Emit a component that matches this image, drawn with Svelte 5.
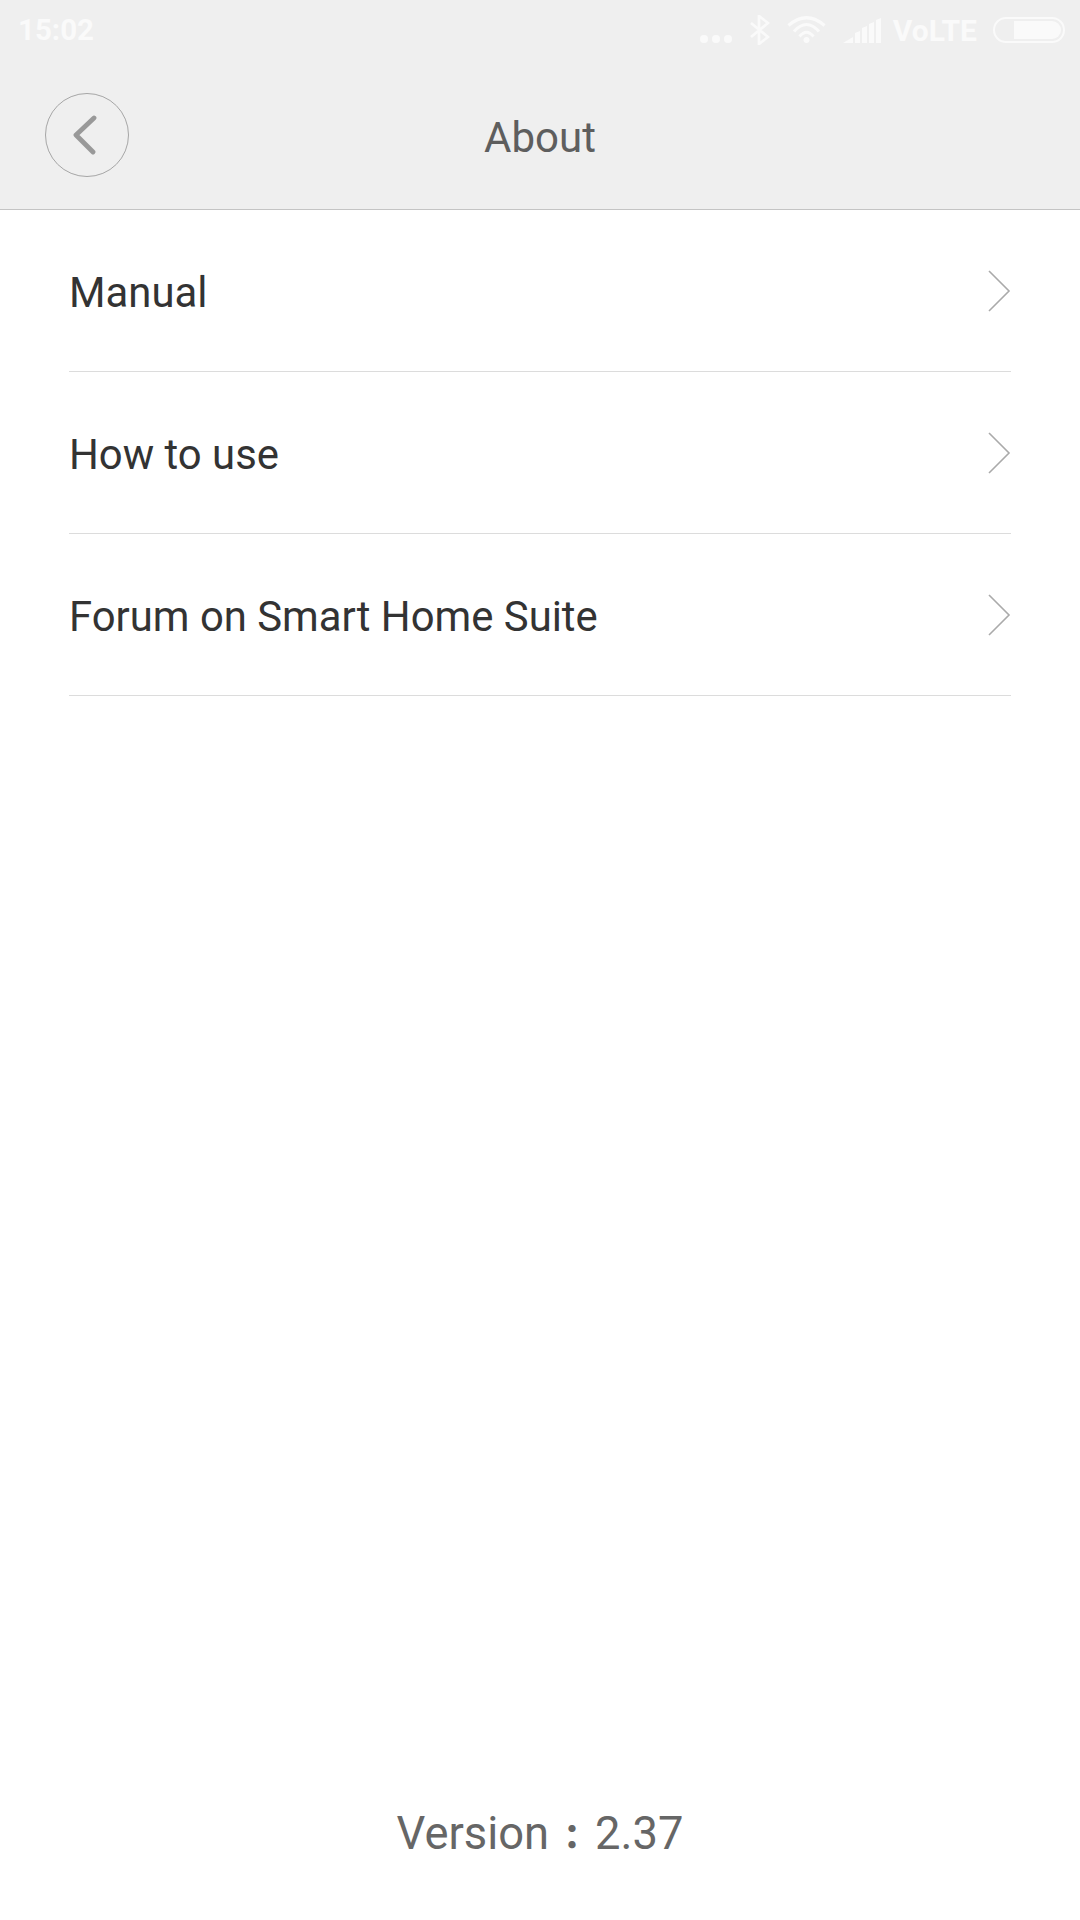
<script>
	const rows = ['Manual', 'How to use', 'Forum on Smart Home Suite'];
</script>

<div class="page">
	<div class="top">
		<div class="status">
			<span class="time">15:02</span>
			<div class="icons">
				<svg class="dots" width="32" height="8" viewBox="0 0 32 8">
					<circle cx="4" cy="4" r="4" />
					<circle cx="16" cy="4" r="4" />
					<circle cx="28" cy="4" r="4" />
				</svg>
				<svg class="bt" width="20" height="30" viewBox="0 0 20 30">
					<path d="M1 8 L18 22 L9 29 V1 L18 8 L1 22" fill="none" stroke="#fafafa" stroke-width="2.6" />
				</svg>
				<svg class="wifi" width="39" height="27" viewBox="0 0 39 27">
					<path d="M1.5 9.5 Q19.5 -6 37.5 9.5" fill="none" stroke="#fafafa" stroke-width="3.2" />
					<path d="M7 15.5 Q19.5 1.5 32 15.5" fill="none" stroke="#fafafa" stroke-width="3.2" />
					<path d="M12.5 20.5 Q19.5 12 26.5 20.5" fill="none" stroke="#fafafa" stroke-width="3" />
					<circle cx="19.5" cy="24" r="3" />
				</svg>
				<svg class="signal" width="38" height="25" viewBox="0 0 38 25">
					<path d="M0 25 L10 19 V25 Z M12 15 L17 13 V25 H12 Z M19 10 L24 8 V25 H19 Z M26 6 L31 4 V25 H26 Z M33 2 L38 0 V25 H33 Z" />
				</svg>
				<span class="volte">VoLTE</span>
				<div class="battery"><div class="level"></div></div>
			</div>
		</div>
		<div class="bar">
			<button class="back" aria-label="Back">
				<svg width="24" height="40" viewBox="0 0 24 40">
					<path d="M21 3 L3 20 L20 37" fill="none" stroke="#999" stroke-width="4.8" stroke-linecap="round" stroke-linejoin="round" />
				</svg>
			</button>
			<span class="title">About</span>
		</div>
	</div>

	<div class="list">
		{#each rows as r}
			<div class="row">
				<span class="label">{r}</span>
				<svg width="24" height="42" viewBox="0 0 24 42">
					<path d="M2 1 L22 21 L2 41" fill="none" stroke="#aaa" stroke-width="1.6" />
				</svg>
			</div>
		{/each}
	</div>

	<div class="version">Version<span class="colon">：</span>2.37</div>
</div>

<style>
	:global(body) {
		margin: 0;
		background: #fff;
	}

	.page {
		height: 1920px;
		display: flex;
		flex-direction: column;
		font-family: Roboto, sans-serif;
	}

	.top {
		height: 209px;
		background: #efefef;
		border-bottom: 1px solid #c4c4c4;
		display: flex;
		flex-direction: column;
	}

	.status {
		height: 60px;
		flex-shrink: 0;
		padding: 0 15px 0 18px;
		display: flex;
		align-items: center;
		justify-content: space-between;
		color: #fafafa;
	}

	.time {
		font-size: 29.5px;
		font-weight: 700;
	}

	.icons {
		display: flex;
		align-items: center;
		fill: #fafafa;
	}

	.dots { margin-top: 18px; margin-right: 18px; }
	.bt { margin-right: 17px; }
	.wifi { margin-right: 17px; margin-top: -1px; }
	.signal { margin-top: 1px; margin-right: 12px; }

	.volte {
		font-size: 30px;
		font-weight: 700;
		margin-right: 16px;
	}

	.battery {
		width: 64px;
		height: 18px;
		border: 2px solid #fafafa;
		border-radius: 13px;
		padding: 2px;
		display: flex;
		justify-content: flex-end;
	}

	.level {
		width: 47px;
		background: #fafafa;
		border-radius: 0 9px 9px 0;
	}

	.bar {
		flex: 1;
		padding-left: 45px;
		display: flex;
		align-items: center;
		position: relative;
	}

	.back {
		width: 84px;
		height: 84px;
		padding: 0 4px 0 0;
		border: 1px solid #a6a6a6;
		border-radius: 50%;
		background: none;
		display: flex;
		align-items: center;
		justify-content: center;
	}

	.title {
		position: absolute;
		left: 0;
		right: 0;
		padding-top: 5px;
		text-align: center;
		font-size: 42px;
		color: #5e5e5e;
	}

	.list {
		padding: 0 69px;
	}

	.row {
		height: 161px;
		border-bottom: 1px solid #dcdcdc;
		display: flex;
		align-items: center;
		justify-content: space-between;
	}

	.label {
		font-size: 41.85px;
		color: #333;
		padding-top: 3px;
	}

	.version {
		margin-top: auto;
		padding-bottom: 60px;
		text-align: center;
		font-size: 45.3px;
		color: #666;
	}

	.colon {
		padding: 0 6px;
		font-family: "Noto Sans CJK JP", sans-serif;
		font-size: 34px;
		font-weight: 900;
	}
</style>
